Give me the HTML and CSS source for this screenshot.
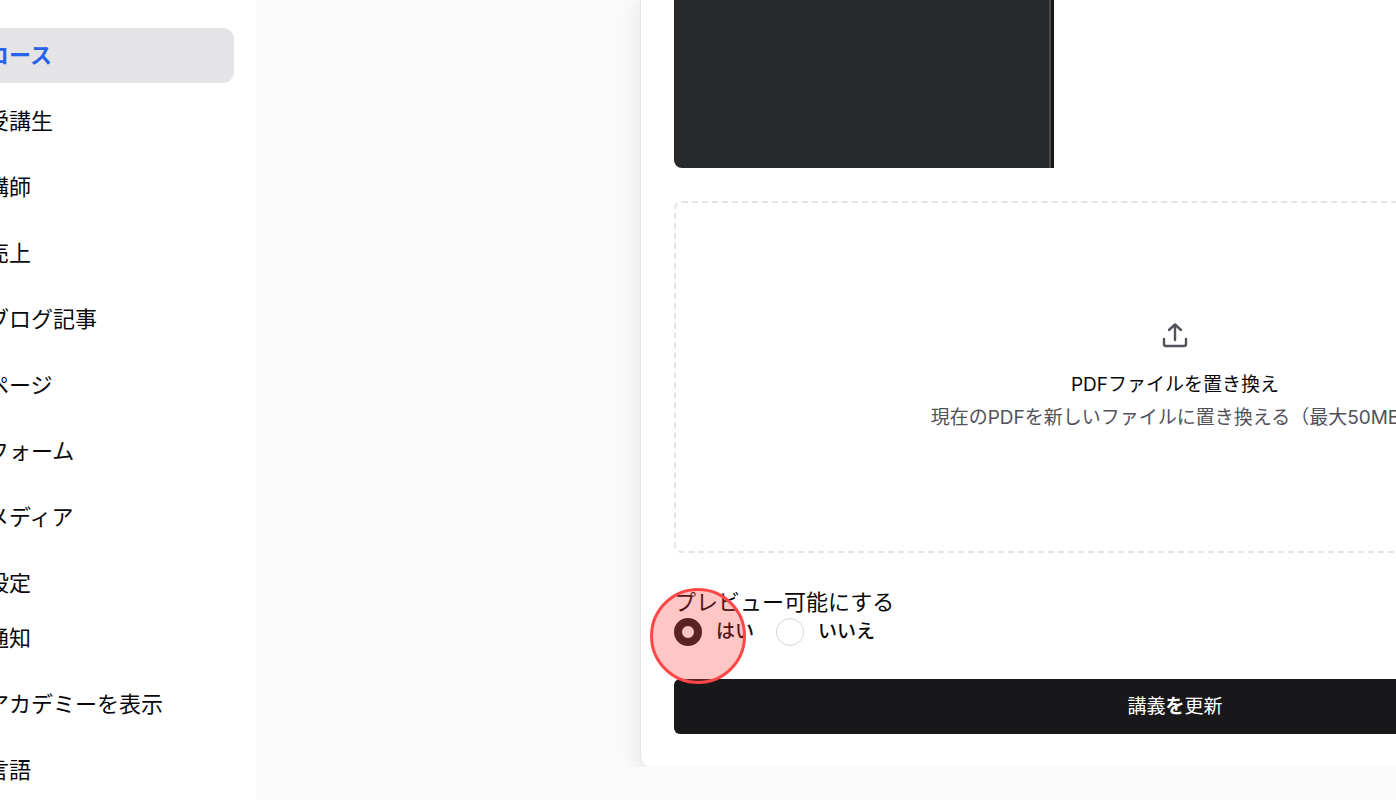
FILE: index.html
```html
<!DOCTYPE html>
<html lang="ja">
<head>
    <meta charset="UTF-8">
    <meta name="viewport" content="width=device-width, initial-scale=1.0">
    <title>講義を更新</title>
    <link rel="stylesheet" href="styles.css">
</head>
<body>
    <aside class="sidebar">
        <nav class="menu">
            <a class="menu-item active" href="#">コース</a>
            <a class="menu-item" href="#">受講生</a>
            <a class="menu-item" href="#">講師</a>
            <a class="menu-item" href="#">売上</a>
            <a class="menu-item" href="#">ブログ記事</a>
            <a class="menu-item" href="#">ページ</a>
            <a class="menu-item" href="#">フォーム</a>
            <a class="menu-item" href="#">メディア</a>
            <a class="menu-item" href="#">設定</a>
        </nav>
        <nav class="menu">
            <a class="menu-item" href="#">通知</a>
            <a class="menu-item" href="#">アカデミーを表示</a>
            <a class="menu-item" href="#">言語</a>
        </nav>
    </aside>

    <main class="main">
        <div class="content">
            <form class="card">
                <div class="pdf-preview"></div>

                <button type="button" class="dropzone">
                    <svg class="upload-icon" viewBox="0 0 24 24" fill="none" stroke="currentColor" stroke-width="2.4" stroke-linecap="round" stroke-linejoin="round" aria-hidden="true">
                        <path d="M1 15v5a2 2 0 0 0 2 2h18a2 2 0 0 0 2-2v-5"/>
                        <path d="M6 6l6-5.500 6 5.500"/>
                        <path d="M12 1v15"/>
                    </svg>
                    <span class="dropzone-title">PDFファイルを置き換え</span>
                    <span class="dropzone-hint">現在のPDFを新しいファイルに置き換える（最大50MB）</span>
                </button>

                <fieldset class="preview-option">
                    <legend>プレビュー可能にする</legend>
                    <div class="radio-row">
                        <label class="radio"><input type="radio" name="preview" value="yes" checked>はい</label>
                        <label class="radio"><input type="radio" name="preview" value="no">いいえ</label>
                        <span class="click-marker"></span>
                    </div>
                </fieldset>

                <button type="submit" class="submit">講義<b>を</b>更新</button>
            </form>
        </div>
    </main>
</body>
</html>
```
FILE: styles.css
```css
* {
    box-sizing: border-box;
}
body {
    margin: 0;
    display: flex;
    min-height: 100vh;
    overflow: hidden;
    font-family: Inter, "Noto Sans CJK JP", sans-serif;
    background-color: #fafafa;
    color: #09090b;
}
.sidebar {
    flex: 0 0 256px;
    padding: 28px 22px 0 0;
    background-color: white;
}
.menu {
    display: flex;
    flex-direction: column;
    gap: 11px;
    margin-left: -24px;
}
.menu-item {
    padding: 0 11px;
    border-radius: 11px;
    font-size: 22px;
    line-height: 55px;
    white-space: nowrap;
    color: inherit;
    text-decoration: none;
}
.menu-item.active {
    background-color: #e4e4e7;
    color: #2563eb;
    font-weight: bold;
}
.main {
    flex: 1;
    min-width: 0;
}
.content {
    overflow: hidden;
    padding-left: 384px;
}
.card {
    display: flex;
    flex-direction: column;
    gap: 33px;
    margin-right: -314px;
    padding: 0 33px 33px;
    border: 1px solid #e4e4e7;
    border-width: 0 1px;
    border-radius: 0 0 11px 11px;
    background-color: white;
    box-shadow: 0 4px 24px rgba(0,0,0,0.1);
}
.pdf-preview {
    width: 380px;
    height: 168px;
    border-bottom-left-radius: 8px;
    background: linear-gradient(to left, #18191a 3px, #4a4b4b 3px, #4a4b4b 5px, #28292a 5px);
}
.dropzone {
    display: flex;
    flex-direction: column;
    align-items: center;
    padding: 121px 0 117px;
    border: 2px dashed #e4e4e7;
    border-radius: 8px;
    background: none;
    font-family: inherit;
    font-size: 19px;
    line-height: 33px;
    color: inherit;
    cursor: pointer;
}
.upload-icon {
    width: 24px;
    height: 24px;
    margin-bottom: 20px;
    color: #52525b;
    overflow: visible;
}
.dropzone-hint {
    color: #52525b;
}
.preview-option {
    margin: 0;
    padding: 0;
    border: none;
}
.preview-option legend {
    padding: 0;
    font-size: 22px;
    line-height: 32px;
}
.radio-row {
    position: relative;
    display: flex;
    gap: 22px;
}
.radio {
    display: flex;
    align-items: center;
    gap: 14px;
    font-size: 19px;
    font-weight: 500;
    line-height: 28px;
}
.radio input {
    appearance: none;
    width: 28px;
    height: 28px;
    margin: 0;
    border: 1px solid #d4d4d8;
    border-radius: 50%;
    background-color: white;
}
.radio input:checked {
    border: 8px solid #18181b;
}
.click-marker {
    position: absolute;
    top: -30px;
    left: -24px;
    width: 96px;
    height: 96px;
    border: 3px solid #ff4747;
    border-radius: 50%;
    background-color: rgba(255,60,60,0.29);
    pointer-events: none;
}
.submit {
    padding: 0;
    border: none;
    border-radius: 6px;
    background-color: #18181b;
    color: white;
    font-family: inherit;
    font-size: 19px;
    line-height: 55px;
    cursor: pointer;
}
```
